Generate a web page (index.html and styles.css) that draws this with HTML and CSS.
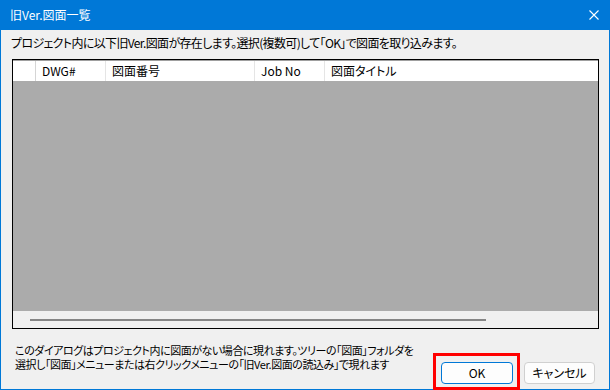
FILE: index.html
```html
<!DOCTYPE html>
<html lang="ja">
<head>
<meta charset="utf-8">
<title>旧Ver.図面一覧</title>
<link rel="stylesheet" href="styles.css">
</head>
<body>
<div class="window">
  <div class="titlebar">
    <span class="title">旧Ver.図面一覧</span>
    <svg class="close" width="10" height="10" viewBox="0 0 10 10"><path d="M0.5 0.5L9.5 9.5M9.5 0.5L0.5 9.5" stroke="#fff" stroke-width="1.1" fill="none"/></svg>
  </div>
  <div class="content">
    <div class="instruction">プロジェクト内に以下旧Ver.図面が存在します。選択(複数可)して「OK」で図面を取り込みます。</div>
    <div class="list">
      <div class="header">
        <div class="col c0"></div>
        <div class="col c1">DWG#</div>
        <div class="col c2">図面番号</div>
        <div class="col c3">Job No</div>
        <div class="col c4">図面タイトル</div>
      </div>
      <div class="body"></div>
      <div class="hscroll"><div class="thumb"></div></div>
    </div>
    <div class="footer">
      <div class="note">このダイアログはプロジェクト内に図面がない場合に現れます。ツリーの「図面」フォルダを<br>選択し「図面」メニューまたは右クリックメニューの「旧Ver.図面の読込み」で現れます</div>
      <div class="buttons">
        <button class="btn ok">OK</button>
        <button class="btn">キャンセル</button>
      </div>
    </div>
    <div class="highlight"></div>
  </div>
</div>
</body>
</html>
```

FILE: styles.css
```css
* { box-sizing: border-box; }
html, body { margin: 0; padding: 0; }
body {
  width: 610px;
  height: 390px;
  font-family: "Noto Sans CJK JP", "Noto Sans", sans-serif;
  font-size: 12px;
  font-feature-settings: "palt";
  color: #000;
}
.window {
  width: 610px;
  height: 390px;
  border: 1px solid #0078d7;
  border-top: none;
  background: #f0f0f0;
  display: flex;
  flex-direction: column;
  position: relative;
}
.titlebar {
  height: 30px;
  margin: 0 -1px;
  background: #0078d7;
  display: flex;
  align-items: center;
  padding-left: 10px;
  padding-right: 11px;
  color: #fff;
}
.title { line-height: 16px; flex: 1; }
.close { display: block; }
.content {
  flex: 1;
  position: relative;
  display: flex;
  flex-direction: column;
}
.instruction {
  margin-top: 5px;
  padding-left: 10px;
  line-height: 16px;
  height: 16px;
  white-space: nowrap;
  letter-spacing: -0.65px;
}
.list {
  margin-top: 8px;
  margin-left: 11px;
  width: 587px;
  height: 270px;
  border: 1px solid #000;
  display: flex;
  flex-direction: column;
}
.header {
  height: 21px;
  background: #fff;
  display: flex;
  border-top: 1px solid #a0a0a0;
}
.col {
  height: 100%;
  border-right: 1px solid #e5e5e5;
  padding-left: 6px;
  line-height: 19px;
  white-space: nowrap;
}
.c0 { width: 23px; border-right-color: #d5d5d5; }
.c1 { width: 70px; }
.c2 { width: 149px; }
.c3 { width: 70px; }
.c4 { flex: 1; border-right: none; }
.body {
  flex: 1;
  background: #ababab;
}
.hscroll {
  height: 17px;
  background: #f0f0f0;
  position: relative;
}
.thumb {
  position: absolute;
  left: 17px;
  top: 8px;
  width: 456px;
  height: 2px;
  background: #858585;
}
.footer {
  display: flex;
  align-items: flex-start;
  padding-left: 14px;
  padding-right: 14px;
}
.note {
  flex: none;
  margin-top: 14px;
  line-height: 14px;
  white-space: nowrap;
  font-size: 11px;
  letter-spacing: -0.45px;
}
.buttons {
  flex: none;
  margin-left: auto;
  margin-top: 33px;
  display: flex;
  gap: 11px;
}
.btn {
  width: 71px;
  height: 22px;
  border: 1px solid #d0d0d0;
  border-radius: 4px;
  background: #fdfdfd;
  font-family: inherit;
  font-size: 12px;
  font-feature-settings: "palt";
  color: #000;
  padding: 0;
  line-height: 18px;
}
.btn.ok {
  width: 72px;
  border-color: #0078d7;
}
.highlight {
  position: absolute;
  left: 432px;
  top: 323px;
  width: 87px;
  height: 37px;
  border: 3px solid #f00;
}
```
